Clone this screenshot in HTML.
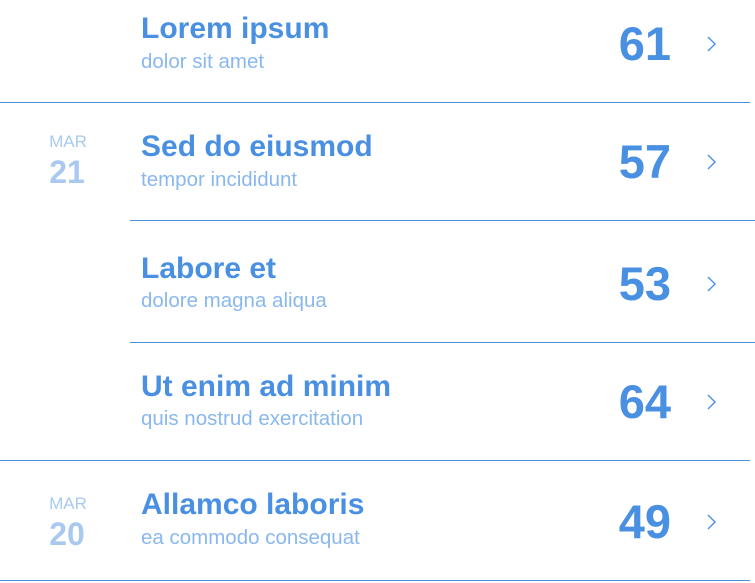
<!DOCTYPE html>
<html><head><meta charset="utf-8"><style>
body{margin:0;width:755px;height:583px;background:#fff;position:relative;overflow:hidden;font-family:"Liberation Sans",sans-serif}
.t,.s,.n,.m,.d,.c{position:absolute;white-space:nowrap;line-height:1}
.t{left:141px;font-size:30px;font-weight:bold;color:#4a90e2}
.s{left:141px;font-size:20.5px;color:#8ab8ee}
.n{right:84px;font-size:47px;font-weight:bold;color:#4a90e2}
.m{left:45px;width:46px;text-align:center;font-size:17px;color:#a9c9f0}
.d{left:44px;width:46px;text-align:center;font-size:32px;font-weight:bold;color:#a9c9f0}
.l{position:absolute;height:1px;background:#4a90e2}
svg.c{left:706px;width:12px;height:18px}
</style></head><body>
<div class="t" style="top:14px">Lorem ipsum</div><div class="s" style="top:52px">dolor sit amet</div><div class="n" style="top:20px">61</div>
<svg class="c" style="top:35px" viewBox="0 0 12 18"><path d="M2 2l7 7-7 7" fill="none" stroke="#4a90e2" stroke-width="1.4"/></svg>
<div class="l" style="top:102px;left:0;width:750px"></div>
<div class="m" style="top:133px">MAR</div><div class="d" style="top:156px">21</div>
<div class="t" style="top:132px">Sed do eiusmod</div><div class="s" style="top:170px">tempor incididunt</div><div class="n" style="top:138px">57</div>
<svg class="c" style="top:153px" viewBox="0 0 12 18"><path d="M2 2l7 7-7 7" fill="none" stroke="#4a90e2" stroke-width="1.4"/></svg>
<div class="l" style="top:220px;left:130px;width:625px"></div>
<div class="t" style="top:254px">Labore et</div><div class="s" style="top:291px">dolore magna aliqua</div><div class="n" style="top:260px">53</div>
<svg class="c" style="top:275px" viewBox="0 0 12 18"><path d="M2 2l7 7-7 7" fill="none" stroke="#4a90e2" stroke-width="1.4"/></svg>
<div class="l" style="top:342px;left:130px;width:625px"></div>
<div class="t" style="top:372px">Ut enim ad minim</div><div class="s" style="top:409px">quis nostrud exercitation</div><div class="n" style="top:378px">64</div>
<svg class="c" style="top:393px" viewBox="0 0 12 18"><path d="M2 2l7 7-7 7" fill="none" stroke="#4a90e2" stroke-width="1.4"/></svg>
<div class="l" style="top:460px;left:0;width:750px"></div>
<div class="m" style="top:495px">MAR</div><div class="d" style="top:518px">20</div>
<div class="t" style="top:490px">Allamco laboris</div><div class="s" style="top:528px">ea commodo consequat</div><div class="n" style="top:498px">49</div>
<svg class="c" style="top:513px" viewBox="0 0 12 18"><path d="M2 2l7 7-7 7" fill="none" stroke="#4a90e2" stroke-width="1.4"/></svg>
<div class="l" style="top:580px;left:0;width:750px"></div>
</body></html>
